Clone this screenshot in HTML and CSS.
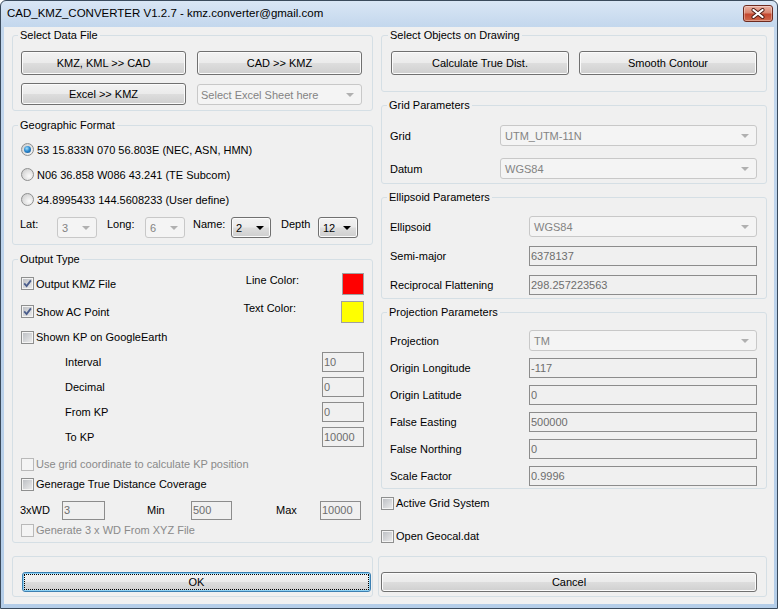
FILE: index.html
```html
<!DOCTYPE html>
<html lang="en">
<head>
    <meta charset="UTF-8">
    <title>CAD_KMZ_CONVERTER V1.2.7</title>
    <link rel="stylesheet" href="styles.css">
</head>
<body>
<div class="window">
    <div class="titlebar">
        <span class="title">CAD_KMZ_CONVERTER V1.2.7 - kmz.converter@gmail.com</span>
        <span class="close-btn">
            <svg width="14" height="11" viewBox="0 0 14 11">
                <path d="M2.5 2l9 7M11.5 2l-9 7" stroke="#4a1a12" stroke-width="4" stroke-linecap="round"/>
                <path d="M2.5 2l9 7M11.5 2l-9 7" stroke="#fff" stroke-width="2.2" stroke-linecap="round"/>
            </svg>
        </span>
    </div>

    <div class="client">
        <!-- left column -->
        <div class="col">
            <fieldset class="group data-group">
                <legend>Select Data File</legend>
                <div class="row btn-row">
                    <button class="btn data-btn">KMZ, KML &gt;&gt; CAD</button>
                    <button class="btn data-btn">CAD &gt;&gt; KMZ</button>
                </div>
                <div class="row btn-row second">
                    <button class="btn data-btn short">Excel &gt;&gt; KMZ</button>
                    <div class="combo disabled sheet-combo"><span>Select Excel Sheet here</span><i class="arrow"></i></div>
                </div>
            </fieldset>

            <fieldset class="group geo-group">
                <legend>Geographic Format</legend>
                <label class="radio-row"><span class="rb on"></span>53 15.833N 070 56.803E (NEC, ASN, HMN)</label>
                <label class="radio-row"><span class="rb"></span>N06 36.858 W086 43.241 (TE Subcom)</label>
                <label class="radio-row"><span class="rb"></span>34.8995433 144.5608233 (User define)</label>
                <div class="row lat-row">
                    <span class="lbl lbl-lat">Lat:</span>
                    <div class="combo disabled small"><span>3</span><i class="arrow"></i></div>
                    <span class="lbl lbl-long">Long:</span>
                    <div class="combo disabled small"><span>6</span><i class="arrow"></i></div>
                    <span class="lbl lbl-name">Name:</span>
                    <div class="combo small"><span>2</span><i class="arrow"></i></div>
                    <span class="lbl lbl-depth">Depth</span>
                    <div class="combo small"><span>12</span><i class="arrow"></i></div>
                </div>
            </fieldset>

            <fieldset class="group output-group">
                <legend>Output Type</legend>
                <div class="row color-row">
                    <label class="check"><span class="cb"><svg viewBox="0 0 11 11"><path d="M2.2 5.4l2.4 2.6 4.3-5.6"/></svg></span>Output KMZ File</label>
                    <span class="color-lbl line-lbl">Line Color:</span>
                    <span class="swatch red"></span>
                </div>
                <div class="row color-row second">
                    <label class="check"><span class="cb"><svg viewBox="0 0 11 11"><path d="M2.2 5.4l2.4 2.6 4.3-5.6"/></svg></span>Show AC Point</label>
                    <span class="color-lbl text-lbl">Text Color:</span>
                    <span class="swatch yellow"></span>
                </div>
                <div class="row kp-check">
                    <label class="check"><span class="cb"></span>Shown KP on GoogleEarth</label>
                </div>
                <div class="row kp-row"><span class="kp-lbl">Interval</span><span class="field kp-field">10</span></div>
                <div class="row kp-row"><span class="kp-lbl">Decimal</span><span class="field kp-field">0</span></div>
                <div class="row kp-row"><span class="kp-lbl">From KP</span><span class="field kp-field">0</span></div>
                <div class="row kp-row"><span class="kp-lbl">To KP</span><span class="field kp-field">10000</span></div>
                <div class="row line-row grid-coord">
                    <label class="check off"><span class="cb"></span>Use grid coordinate to calculate KP position</label>
                </div>
                <div class="row line-row">
                    <label class="check"><span class="cb"></span>Generage True Distance Coverage</label>
                </div>
                <div class="row line-row wd-row">
                    <span class="lbl wd-lbl">3xWD</span>
                    <span class="field wd-field wide">3</span>
                    <span class="lbl min-lbl">Min</span>
                    <span class="field wd-field">500</span>
                    <span class="lbl max-lbl">Max</span>
                    <span class="field wd-field">10000</span>
                </div>
                <div class="row line-row">
                    <label class="check off"><span class="cb"></span>Generate 3 x WD From XYZ File</label>
                </div>
            </fieldset>
        </div>

        <!-- right column -->
        <div class="col">
            <fieldset class="group objects-group">
                <legend>Select Objects on Drawing</legend>
                <div class="row btn-row">
                    <button class="btn obj-btn">Calculate True Dist.</button>
                    <button class="btn obj-btn">Smooth Contour</button>
                </div>
            </fieldset>

            <fieldset class="group grid-group">
                <legend>Grid Parameters</legend>
                <div class="row param-row combo-row">
                    <span class="param-lbl">Grid</span>
                    <div class="combo disabled"><span>UTM_UTM-11N</span><i class="arrow"></i></div>
                </div>
                <div class="row param-row combo-row datum">
                    <span class="param-lbl">Datum</span>
                    <div class="combo disabled"><span>WGS84</span><i class="arrow"></i></div>
                </div>
            </fieldset>

            <fieldset class="group ellipsoid-group">
                <legend>Ellipsoid Parameters</legend>
                <div class="row param-row combo-row">
                    <span class="param-lbl wide">Ellipsoid</span>
                    <div class="combo disabled"><span>WGS84</span><i class="arrow"></i></div>
                </div>
                <div class="row param-row field-row">
                    <span class="param-lbl wide">Semi-major</span>
                    <span class="field">6378137</span>
                </div>
                <div class="row param-row field-row">
                    <span class="param-lbl wide">Reciprocal Flattening</span>
                    <span class="field">298.257223563</span>
                </div>
            </fieldset>

            <fieldset class="group projection-group">
                <legend>Projection Parameters</legend>
                <div class="row param-row combo-row">
                    <span class="param-lbl wide">Projection</span>
                    <div class="combo disabled"><span>TM</span><i class="arrow"></i></div>
                </div>
                <div class="row param-row proj-row">
                    <span class="param-lbl wide">Origin Longitude</span>
                    <span class="field">-117</span>
                </div>
                <div class="row param-row proj-row">
                    <span class="param-lbl wide">Origin Latitude</span>
                    <span class="field">0</span>
                </div>
                <div class="row param-row proj-row">
                    <span class="param-lbl wide">False Easting</span>
                    <span class="field">500000</span>
                </div>
                <div class="row param-row proj-row">
                    <span class="param-lbl wide">False Northing</span>
                    <span class="field">0</span>
                </div>
                <div class="row param-row proj-row">
                    <span class="param-lbl wide">Scale Factor</span>
                    <span class="field">0.9996</span>
                </div>
            </fieldset>

            <div class="row line-row active-grid">
                <label class="check"><span class="cb"></span>Active Grid System</label>
            </div>
            <div class="row line-row geocal">
                <label class="check"><span class="cb"></span>Open Geocal.dat</label>
            </div>
        </div>

        <div class="footer">
            <div class="foot-box ok-box">
                <button class="btn foot-btn focus"><span>OK</span></button>
            </div>
            <div class="foot-box cancel-box">
                <button class="btn foot-btn">Cancel</button>
            </div>
        </div>
    </div>
</div>
</body>
</html>
```

FILE: styles.css
```css
* {
    margin: 0;
    padding: 0;
    box-sizing: border-box;
}

body {
    font-family: "Liberation Sans", Arial, sans-serif;
    font-size: 11px;
    color: #000;
    background: #fff;
}

/* window frame */
.window {
    width: 778px;
    height: 609px;
    border: 1px solid #3a4a5c;
    border-radius: 6px 6px 0 0;
    padding: 0 3px 4px;
    background: linear-gradient(#d9e6f5, #c3d7ed 26px, #b4cde8);
}

.titlebar {
    height: 26px;
    display: flex;
    justify-content: space-between;
    align-items: flex-start;
    padding-left: 3px;
}

.title {
    font-size: 11.5px;
    line-height: 25px;
}

.close-btn {
    width: 30px;
    height: 17px;
    margin: 4px 1px 0 0;
    border: 1px solid #6e2b20;
    border-radius: 3px;
    background: linear-gradient(#eab0a2, #d98670 45%, #c4472f 55%, #cf6a4d);
    box-shadow: inset 0 0 0 1px rgba(255, 255, 255, 0.35);
    display: flex;
    align-items: center;
    justify-content: center;
}

.client {
    height: 577px;
    background: #f0f0f0;
    display: grid;
    grid-template-columns: 361px 386px;
    column-gap: 8px;
    align-content: start;
    align-items: start;
    padding: 1px 7px 0 8px;
}

/* group boxes */
.group {
    border: 1px solid #d5dfe5;
    border-radius: 3px;
    min-width: 0;
    padding: 0 8px;
}

.group legend {
    padding: 0 2px;
    margin-left: -3px;
    line-height: 14px;
}

.row {
    display: flex;
    align-items: center;
}

/* buttons */
.btn {
    font: inherit;
    color: #000;
    height: 24px;
    border: 1px solid #707070;
    border-radius: 3px;
    background: linear-gradient(#f2f2f2, #ebebeb 48%, #dddddd 52%, #cfcfcf);
    box-shadow: inset 0 0 0 1px #fbfbfb;
}

.btn-row {
    gap: 11px;
}

.data-btn {
    width: 165px;
}

.data-btn.short {
    height: 22px;
}

.btn-row.second {
    margin-top: 8px;
    align-items: flex-start;
}

/* combo boxes */
.combo {
    height: 21px;
    flex: 1;
    display: flex;
    align-items: center;
    justify-content: space-between;
    padding: 0 7px 0 4px;
    border: 1px solid #707070;
    border-radius: 3px;
    background: linear-gradient(#f2f2f2, #ebebeb 48%, #dddddd 52%, #cfcfcf);
    box-shadow: inset 0 0 0 1px #fbfbfb;
}

.combo.disabled {
    border-color: #c8c8c8;
    background: #f4f4f4;
    box-shadow: none;
    color: #838383;
}

.arrow {
    width: 0;
    height: 0;
    border-left: 4px solid transparent;
    border-right: 4px solid transparent;
    border-top: 4px solid #000;
}

.combo.disabled .arrow {
    border-top-color: #b0b0b0;
}

.sheet-combo {
    flex: none;
    width: 165px;
    margin-top: 1px;
    padding-left: 3px;
}

.combo.small {
    flex: none;
    width: 40px;
    padding-right: 6px;
}

/* text fields */
.field {
    height: 20px;
    flex: 1;
    border: 1px solid #8c8c8c;
    background: #f0f0f0;
    color: #6d6d6d;
    line-height: 18px;
    padding-left: 1px;
}

/* check boxes and radio buttons */
.check {
    display: flex;
    align-items: center;
    gap: 2px;
}

.cb {
    width: 13px;
    height: 13px;
    flex: none;
    border: 1px solid #8e8f8f;
    background: linear-gradient(135deg, #b9bcc1, #eeeeee);
    box-shadow: inset 0 0 0 1px #f4f4f4;
}

.cb svg {
    display: block;
    width: 11px;
    height: 11px;
    fill: none;
    stroke: #4a5d8c;
    stroke-width: 1.8;
}

.check.off {
    color: #8a8a8a;
}

.check.off .cb {
    border-color: #b9b9b9;
    background: #f4f4f4;
    box-shadow: none;
}

.radio-row {
    height: 25px;
    display: flex;
    align-items: center;
    gap: 3px;
}

.rb {
    width: 13px;
    height: 13px;
    border-radius: 50%;
    border: 1px solid #8e8f8f;
    background: radial-gradient(circle at 65% 65%, #fbfbfb, #dcdcdc 60%, #c3c3c3);
    display: flex;
    align-items: center;
    justify-content: center;
}

.rb.on::after {
    content: "";
    width: 7px;
    height: 7px;
    border-radius: 50%;
    background: radial-gradient(circle at 40% 35%, #a6e1fb, #2c8ad0 45%, #124c86);
}

/* left column groups */
.data-group {
    padding: 9px 9px 5px 8px;
}

.geo-group {
    margin-top: 7px;
    padding: 5px 8px 6px 8px;
}

.lat-row {
    margin-top: 5px;
    align-items: flex-start;
}

.lbl {
    line-height: 14px;
}

.lbl-lat {
    width: 37px;
    margin-left: -1px;
}

.lbl-long {
    width: 38px;
    margin-left: 10px;
}

.lbl-name {
    width: 38px;
    margin-left: 8px;
}

.lbl-depth {
    width: 37px;
    margin-left: 10px;
}

.output-group {
    margin-top: 7px;
    padding: 7px 8px 2px 8px;
}

.color-row {
    height: 22px;
    align-items: flex-start;
}

.color-row .check {
    height: 21px;
}

.color-row.second {
    margin-top: 6px;
}

.color-lbl {
    margin-left: auto;
    line-height: 14px;
}

.line-lbl {
    margin-right: 43px;
}

.text-lbl {
    margin-right: 45px;
}

.swatch {
    width: 22px;
    height: 22px;
    border: 1px solid #a0a0a0;
}

.swatch.red {
    background: #ff0000;
}

.swatch.yellow {
    width: 23px;
    background: #ffff00;
}

.kp-check {
    height: 24px;
    margin-top: 2px;
}

.kp-row {
    height: 25px;
    padding-left: 44px;
}

.kp-field {
    flex: none;
    width: 42px;
    margin-left: auto;
}

.line-row {
    height: 20px;
}

.grid-coord {
    margin-top: 5px;
}

.wd-row {
    margin-top: 6px;
}

.wd-field {
    flex: none;
    width: 41px;
    height: 19px;
    line-height: 17px;
}

.wd-field.wide {
    width: 43px;
}

.wd-lbl {
    width: 42px;
    margin-left: -1px;
}

.min-lbl {
    width: 44px;
    margin-left: 42px;
}

.max-lbl {
    width: 44px;
    margin-left: 44px;
}

/* right column groups */
.objects-group {
    padding: 9px 9px 16px 9px;
}

.obj-btn {
    width: 178px;
}

.objects-group .btn-row {
    gap: 10px;
}

.grid-group {
    margin-top: 6px;
    padding: 13px 9px 4px 8px;
}

.ellipsoid-group {
    margin-top: 6px;
    padding: 12px 9px 3px 8px;
}

.projection-group {
    margin-top: 6px;
    padding: 11px 9px 2px 8px;
}

.param-lbl {
    width: 110px;
    flex: none;
}

.param-lbl.wide {
    width: 139px;
}

.combo-row {
    height: 21px;
}

.combo-row.datum {
    margin-top: 12px;
}

.field-row {
    height: 20px;
    margin-top: 9px;
}

.proj-row {
    height: 20px;
    margin-top: 7px;
}

.active-grid {
    margin-top: 4px;
}

.geocal {
    margin-top: 13px;
}

/* OK / Cancel */
.footer {
    grid-column: 1 / -1;
    display: grid;
    grid-template-columns: 361px 389px;
    column-gap: 5px;
    margin-top: 10px;
}

.foot-box {
    border: 1px solid #d5dfe5;
    border-radius: 3px;
    padding: 15px 1px 4px 9px;
}

.cancel-box {
    padding: 15px 9px 4px 2px;
}

.foot-btn {
    width: 100%;
    height: 20px;
}

.foot-btn.focus {
    border-color: #3c7fb1;
    box-shadow: inset 0 0 0 1px #8fd3f5;
}

.foot-btn.focus span {
    display: block;
    margin: 0 2px;
    line-height: 14px;
    outline: 1px dotted #000;
}
```
